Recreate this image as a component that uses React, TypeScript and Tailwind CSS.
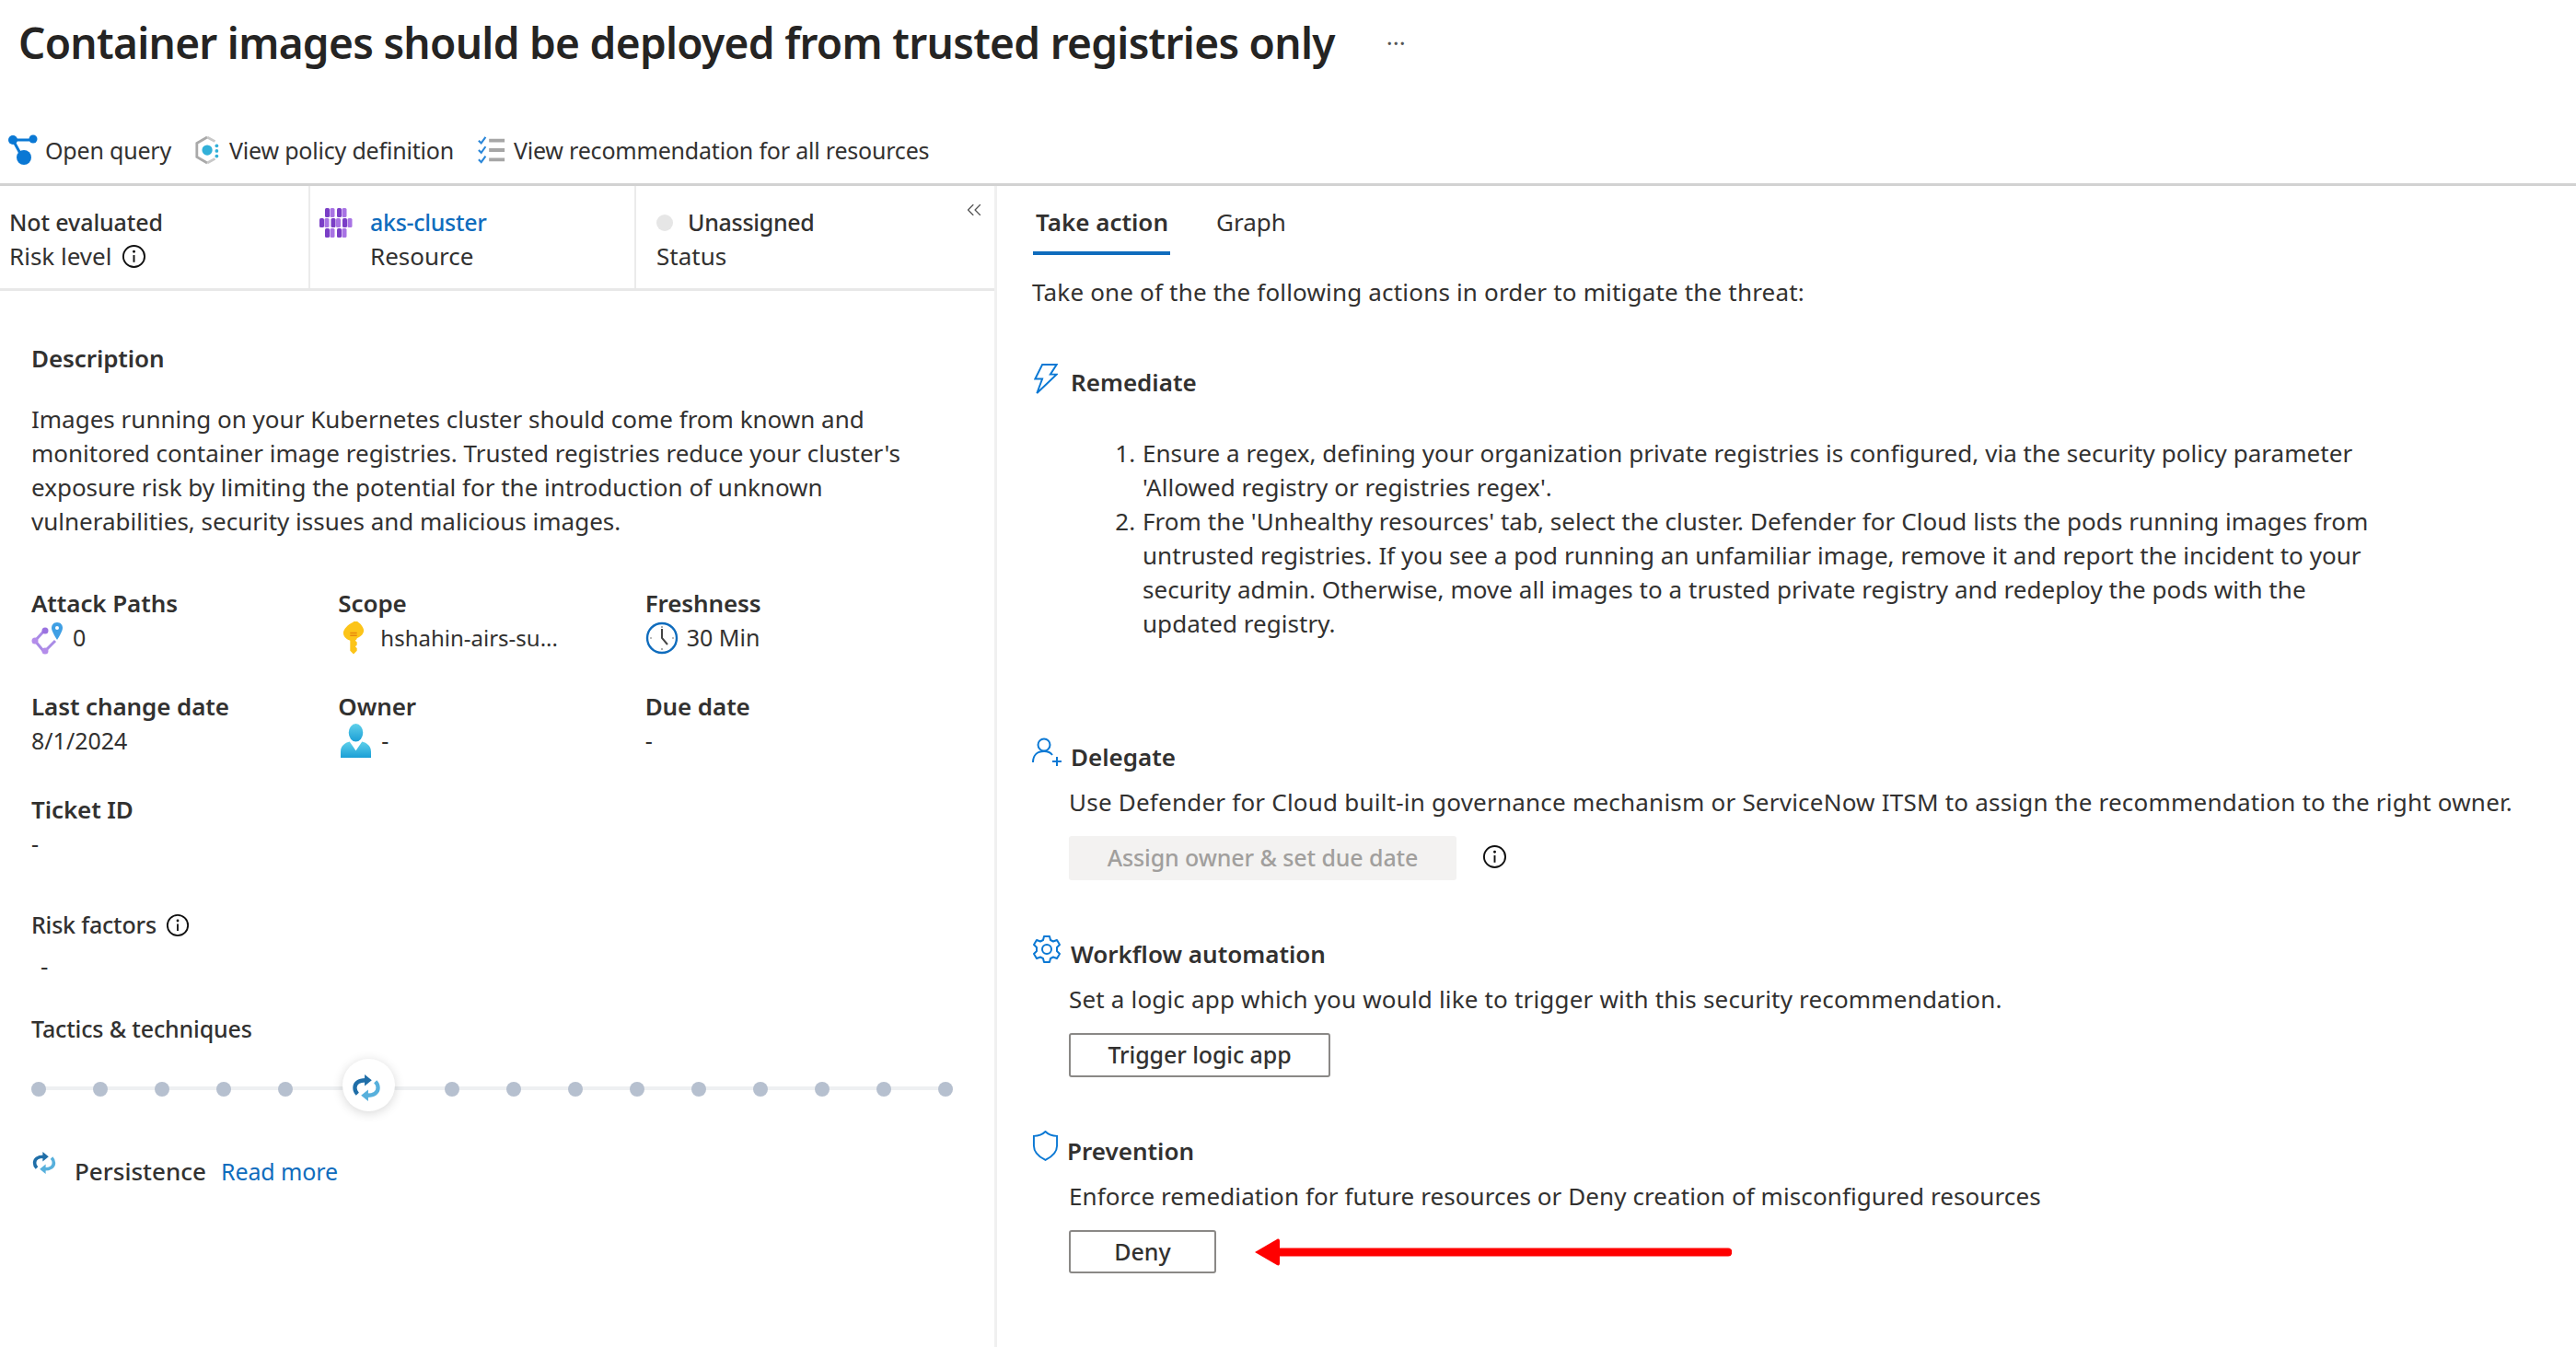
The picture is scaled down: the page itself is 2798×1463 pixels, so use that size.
import { ChevronsLeft } from "lucide-react"
import type { ReactNode } from "react"

const text = "text-[26px] leading-[37px] text-[#323130]"
const small = "text-[25px] leading-[37px] text-[#323130]"

function InfoIcon({ className }: { className?: string }) {
  return (
    <svg viewBox="0 0 28 28" className={className} fill="none">
      <circle cx="14" cy="14" r="12" stroke="#111" strokeWidth="2" />
      <circle cx="14" cy="8.6" r="1.5" fill="#111" />
      <path d="M14 12.5v8" stroke="#111" strokeWidth="2" />
    </svg>
  )
}

function QueryIcon() {
  return (
    <svg viewBox="0 0 34 34" className="h-[34px] w-[34px]">
      <path d="M6 6h22M6 6l11 20" stroke="#0a78d4" strokeWidth="3" fill="none" />
      <circle cx="6" cy="6" r="5" fill="#0a78d4" />
      <circle cx="28" cy="5" r="4.5" fill="#0a78d4" />
      <circle cx="18" cy="25" r="8" fill="#0a78d4" />
    </svg>
  )
}

function PolicyIcon() {
  return (
    <svg viewBox="0 0 32 34" className="h-[34px] w-[30px]">
      <path d="M15 2 3 9v16l12 7" stroke="#a9a9a9" strokeWidth="3" fill="none" />
      <path d="m15 2 9 5M15 32l9-5" stroke="#c8c8c8" strokeWidth="3" fill="none" />
      <circle cx="15" cy="17" r="6" fill="#32b0d8" />
      <circle cx="26" cy="12" r="2" fill="#32b0d8" />
      <circle cx="26" cy="18" r="2" fill="#32b0d8" />
      <circle cx="26" cy="24" r="2" fill="#32b0d8" />
    </svg>
  )
}

function ChecklistIcon() {
  return (
    <svg viewBox="0 0 32 34" className="h-[32px] w-[32px]" fill="none">
      <path d="m1 6 3 3 5-7M1 17l3 3 5-7M1 28l3 3 5-7" stroke="#2a86d8" strokeWidth="2.2" />
      <path d="M13 6h18M13 17h18M13 28h18" stroke="#a6a6a6" strokeWidth="4" />
    </svg>
  )
}

function ClusterIcon() {
  const cells = [
    [6, 0],
    [19, 0],
    [0, 11],
    [12.5, 11],
    [25, 11],
    [6, 22],
    [19, 22],
  ]
  return (
    <svg viewBox="0 0 36 32" className="mt-[3px] h-[32px] w-[36px]">
      {cells.map(([x, y]) => (
        <g key={`${x}-${y}`}>
          <rect x={x} y={y} width="5" height="10" rx="1.5" fill="#7a3ec6" />
          <rect x={x + 5.5} y={y} width="5" height="10" rx="1.5" fill="#a873e4" />
        </g>
      ))}
    </svg>
  )
}

function AttackIcon() {
  return (
    <svg viewBox="0 0 36 36" className="h-[36px] w-[36px]" fill="none">
      <path d="M15 9 4 21l10 12 12-12" stroke="#a98be6" strokeWidth="3" />
      <circle cx="15" cy="10" r="3.5" fill="#9a72e0" />
      <circle cx="4" cy="21" r="3.5" fill="#b48cea" />
      <circle cx="15" cy="32" r="3.5" fill="#b48cea" />
      <path d="M28 1c-4 0-6 3-6 6 0 4 6 13 6 13s6-9 6-13c0-3-2-6-6-6Z" fill="#3f9fe4" />
      <circle cx="28" cy="7" r="2" fill="#fff" />
    </svg>
  )
}

function KeyIcon() {
  return (
    <svg viewBox="0 0 26 38" className="h-[36px] w-[24px]">
      <path d="M13 0 C6 3 1 9 1 13c0 5 5 8 8 9v12l4 4 4-4v-3l-2-2 2-2v-3l-2-2 2-2v-1c3-1 8-4 8-9 0-4-5-10-12-13Z" fill="#fcc419" />
      <path d="M9 13h8M9 16h8" stroke="#e8890c" strokeWidth="1.5" />
    </svg>
  )
}

function ClockIcon() {
  return (
    <svg viewBox="0 0 36 36" className="h-[36px] w-[36px]" fill="none">
      <circle cx="18" cy="18" r="16" fill="#fff" stroke="#0f6cbd" strokeWidth="2.4" />
      <path d="M18 8v10l6 7" stroke="#444" strokeWidth="2" />
      <path d="M18 5v2M18 29v2M5 18h2M29 18h2" stroke="#777" strokeWidth="1.2" />
    </svg>
  )
}

function OwnerIcon() {
  return (
    <svg viewBox="0 0 34 38" className="h-[37px] w-[33px]">
      <defs>
        <linearGradient id="owner" x1="0" y1="0" x2="0" y2="1">
          <stop offset="0" stopColor="#5fd0ea" />
          <stop offset="1" stopColor="#1b9fd6" />
        </linearGradient>
      </defs>
      <ellipse cx="17" cy="10" rx="8" ry="10" fill="url(#owner)" />
      <path d="M0 38v-7c0-7 6-10 10-11l7 10 7-10c4 1 10 4 10 11v7Z" fill="url(#owner)" />
      <path d="m12 20 5 4 5-4-5 10Z" fill="#fff" />
    </svg>
  )
}

function PersistIcon({ className }: { className?: string }) {
  return (
    <svg viewBox="0 0 32 30" className={className} fill="none">
      <path d="M15 6.500C7 6.500 3 10 3 15c0 3 1 5 3 7" stroke="#1f6ea8" strokeWidth="4.500" />
      <path d="M14 0l8 6.500-8 6.500Z" fill="#1f6ea8" />
      <path d="M17 23.500c8 0 12-3.500 12-8.500 0-3-1-5-3-7" stroke="#57b0dc" strokeWidth="4.500" />
      <path d="M18 17l-8 6.500 8 6.500Z" fill="#57b0dc" />
    </svg>
  )
}

function BoltIcon() {
  return (
    <svg viewBox="0 0 26 34" className="h-[33px] w-[26px]" fill="none">
      <path d="M9 1h16l-7 11h7L3 33l6-16H1Z" stroke="#0a78d4" strokeWidth="2" strokeLinejoin="miter" />
    </svg>
  )
}

function DelegateIcon() {
  return (
    <svg viewBox="0 0 34 32" className="h-[32px] w-[34px]" fill="none">
      <circle cx="13" cy="8" r="6.500" stroke="#0a78d4" strokeWidth="2" />
      <path d="M1 27c0-8 5-12 12-12 4 0 7 1 9 4" stroke="#0a78d4" strokeWidth="2" />
      <path d="M27 21v10M22 26h10" stroke="#0a78d4" strokeWidth="2" />
    </svg>
  )
}

function GearIcon() {
  return (
    <svg viewBox="0 0 32 32" className="h-[32px] w-[32px]" fill="none" stroke="#0a78d4" strokeWidth="2">
      <circle cx="16" cy="16" r="5" />
      <path d="M13 2h6l1 4 3 1.500 4-1.500 3 5-3 3v4l3 3-3 5-4-1.500-3 1.500-1 4h-6l-1-4-3-1.500-4 1.500-3-5 3-3v-4l-3-3 3-5 4 1.500 3-1.500Z" strokeLinejoin="round" />
    </svg>
  )
}

function ShieldIcon() {
  return (
    <svg viewBox="0 0 30 34" className="h-[33px] w-[29px]" fill="none">
      <path d="M15 1c3 3 8 5 13 5v11c0 7-5 12-13 16C7 29 2 24 2 17V6c5 0 10-2 13-5Z" stroke="#0a78d4" strokeWidth="2" />
    </svg>
  )
}

function Field({ label, children }: { label: string; children: ReactNode }) {
  return (
    <div>
      <div className={`${text} font-semibold tracking-[-0.1px]`}>{label}</div>
      <div className={`${small} flex h-[37px] items-center`}>{children}</div>
    </div>
  )
}

function Section({ icon, title, desc, titleClass, descClass }: { icon: ReactNode; title: string; desc: string; titleClass?: string; descClass?: string }) {
  return (
    <>
      <div className="flex h-[37px] items-center">
        <div className="flex w-[42px] shrink-0 -translate-y-[4px]">{icon}</div>
        <div className={`${text} pt-[3px] font-semibold ${titleClass ?? ""}`}>{title}</div>
      </div>
      <div className={`${text} mt-[14px] pl-[40px] ${descClass ?? "tracking-[0.18px]"}`}>{desc}</div>
    </>
  )
}

function Timeline() {
  const before = [0, 1, 2, 3, 4]
  const after = [0, 1, 2, 3, 4, 5, 6, 7, 8]
  return (
    <div className="relative mt-[13px] flex h-[59px] w-[1001px] items-center">
      <div className="absolute top-[31px] right-0 left-0 h-[4px] bg-[#eef0f2]" />
      <div className="relative flex items-center gap-[51px]">
        {before.map((i) => (
          <div key={i} className="mt-[8px] h-[16px] w-[16px] rounded-full bg-[#b6c0cf]" />
        ))}
      </div>
      <div className="relative mr-[54px] ml-[54px] flex h-[57px] w-[57px] shrink-0 items-center justify-center rounded-full bg-white pt-[6px] pr-[6px] shadow-[0_2px_12px_rgba(0,0,0,0.16)]">
        <PersistIcon className="h-[29px] w-[32px]" />
      </div>
      <div className="relative flex items-center gap-[51px]">
        {after.map((i) => (
          <div key={i} className="mt-[8px] h-[16px] w-[16px] rounded-full bg-[#b6c0cf]" />
        ))}
      </div>
    </div>
  )
}

export default function App() {
  return (
    <div className="flex h-[1463px] w-full flex-col overflow-hidden bg-white font-['Noto_Sans',sans-serif]">
      <div className="flex h-[92px] items-center pl-[20px]">
        <h1 className="text-[46px] font-semibold tracking-[-0.7px] text-[#252423]">Container images should be deployed from trusted registries only</h1>
        <span className="ml-[56px] text-[26px] text-[#555]">···</span>
      </div>

      <div className="mt-[50px] flex h-[42px] items-center text-[25px] leading-[37px] tracking-[-0.2px] text-[#323130]">
        <div className="ml-[8px] flex items-center gap-[7px]">
          <QueryIcon />
          <span>Open query</span>
        </div>
        <div className="ml-[25px] flex items-center gap-[8px]">
          <PolicyIcon />
          <span>View policy definition</span>
        </div>
        <div className="ml-[25px] flex items-center gap-[8px]">
          <ChecklistIcon />
          <span>View recommendation for all resources</span>
        </div>
      </div>

      <div className="mt-[15px] flex flex-1 border-t-[3px] border-[#d2d2d2]">
        <div className="w-[1083px] shrink-0 border-r-[3px] border-[#f0f0f0]">
          <div className="flex h-[114px] border-b-[3px] border-[#e8e8e8]">
            <div className={`${text} w-[337px] border-r-2 border-[#ebebeb] pt-[21px] pl-[10px]`}>
              <div className="text-[25px] font-medium tracking-[-0.1px]">Not evaluated</div>
              <div className="flex items-center gap-[11px]">
                Risk level <InfoIcon className="h-[27px] w-[27px]" />
              </div>
            </div>
            <div className={`${text} flex w-[354px] border-r-2 border-[#ebebeb] pt-[21px] pl-[10px]`}>
              <div className="w-[55px] shrink-0">
                <ClusterIcon />
              </div>
              <div>
                <div className="text-[25px] font-medium tracking-[-0.3px] text-[#0f6cbd]">aks-cluster</div>
                <div>Resource</div>
              </div>
            </div>
            <div className={`${text} relative flex-1 pt-[21px] pl-[22px]`}>
              <div className="flex items-center gap-[16px]">
                <span className="h-[18px] w-[18px] rounded-full bg-[#e6e6e6]" />
                <span className="text-[25px] font-medium tracking-[-0.3px]">Unassigned</span>
              </div>
              <div>Status</div>
              <ChevronsLeft className="absolute top-[13px] right-[9px] h-[26px] w-[26px] text-[#555]" strokeWidth={1.2} />
            </div>
          </div>

          <div className="pl-[34px]">
            <div className={`${text} mt-[55px] font-semibold tracking-[-0.1px]`}>Description</div>
            <p className={`${text} mt-[29px]`}>
              Images running on your Kubernetes cluster should come from known and
              <br />
              monitored container image registries. Trusted registries reduce your cluster's
              <br />
              exposure risk by limiting the potential for the introduction of unknown
              <br />
              vulnerabilities, security issues and malicious images.
            </p>

            <div className="mt-[52px] grid w-[1000px] grid-cols-3 gap-y-[38px]">
              <Field label="Attack Paths">
                <AttackIcon />
                <span className="ml-[9px]">0</span>
              </Field>
              <Field label="Scope">
                <span className="ml-[5px]">
                  <KeyIcon />
                </span>
                <span className="ml-[17px] text-[24px]">hshahin-airs-su...</span>
              </Field>
              <Field label="Freshness">
                <ClockIcon />
                <span className="ml-[9px]">30 Min</span>
              </Field>
              <Field label="Last change date">8/1/2024</Field>
              <Field label="Owner">
                <span className="ml-[3px]">
                  <OwnerIcon />
                </span>
                <span className="ml-[11px]">-</span>
              </Field>
              <Field label="Due date">-</Field>
              <Field label="Ticket ID">-</Field>
            </div>

            <div className={`${small} mt-[51px] flex items-center gap-[10px] font-medium tracking-[-0.2px]`}>
              Risk factors <InfoIcon className="h-[26px] w-[26px]" />
            </div>
            <div className={`${text} mt-[8px] pl-[10px]`}>-</div>
            <div className={`${small} mt-[31px] font-medium tracking-[-0.15px]`}>Tactics &amp; techniques</div>
            <Timeline />
            <div className={`${text} mt-[46px] flex items-center`}>
              <PersistIcon className="h-[24px] w-[28px] -translate-y-[10px]" />
              <span className="ml-[19px] font-medium">Persistence</span>
              <span className="ml-[16px] text-[25px] tracking-[-0.1px] text-[#0f6cbd]">Read more</span>
            </div>
          </div>
        </div>

        <div className="flex-1 pl-[38px]">
          <div className={`${text} mt-[21px] ml-[1px] flex`}>
            <div className="h-[54px] w-[149px] border-b-4 border-[#0f6cbd] pl-[3px] font-semibold">Take action</div>
            <div className="ml-[50px]">Graph</div>
          </div>
          <div className={`${text} mt-[22px] tracking-[0.18px]`}>Take one of the the following actions in order to mitigate the threat:</div>

          <div className="mt-[59px]">
            <div className="flex h-[37px] items-center">
              <div className="flex w-[42px] shrink-0 -translate-y-[2px] pl-[2px]">
                <BoltIcon />
              </div>
              <div className={`${text} pt-[3px] font-semibold`}>Remediate</div>
            </div>
          </div>
          <ol className={`${text} mt-[42px] ml-[119px] w-[1370px] list-decimal tracking-[0.05px]`}>
            <li className="pl-[1px]">
              Ensure a regex, defining your organization private registries is configured, via the security policy parameter
              <br />
              'Allowed registry or registries regex'.
            </li>
            <li className="pl-[1px]">
              From the 'Unhealthy resources' tab, select the cluster. Defender for Cloud lists the pods running images from
              <br />
              untrusted registries. If you see a pod running an unfamiliar image, remove it and report the incident to your
              <br />
              security admin. Otherwise, move all images to a trusted private registry and redeploy the pods with the
              <br />
              updated registry.
            </li>
          </ol>

          <div className="mt-[106px]">
            <Section
              icon={<DelegateIcon />}
              title="Delegate"
              desc="Use Defender for Cloud built-in governance mechanism or ServiceNow ITSM to assign the recommendation to the right owner."
              descClass="tracking-[0.22px]"
            />
            <div className="mt-[18px] ml-[40px] flex items-center">
              <div className="flex h-[48px] w-[421px] items-center justify-center rounded-[3px] bg-[#f3f2f1] text-[25px] font-medium tracking-[-0.1px] text-[#a19f9d]">
                Assign owner &amp; set due date
              </div>
              <InfoIcon className="ml-[28px] h-[27px] w-[27px] -translate-y-[2px]" />
            </div>
          </div>

          <div className="mt-[60px]">
            <Section icon={<GearIcon />} title="Workflow automation" desc="Set a logic app which you would like to trigger with this security recommendation." />
            <div className="mt-[18px] ml-[40px] flex h-[48px] w-[284px] items-center justify-center rounded-[3px] border-2 border-[#8a8886] text-[25px] font-medium tracking-[-0.1px] text-[#323130]">
              Trigger logic app
            </div>
          </div>

          <div className="mt-[60px]">
            <Section
              icon={<ShieldIcon />}
              title="Prevention"
              titleClass="-ml-[4px]"
              desc="Enforce remediation for future resources or Deny creation of misconfigured resources"
              descClass="tracking-[0.09px]"
            />
            <div className="mt-[18px] ml-[40px] flex items-center">
              <div className="flex h-[47px] w-[160px] items-center justify-center rounded-[3px] border-2 border-[#8a8886] text-[25px] font-medium text-[#323130]">Deny</div>
              <svg viewBox="0 0 520 32" className="ml-[40px] h-[32px] w-[520px]">
                <path d="M28 16h488" stroke="#ff0000" strokeWidth="9" strokeLinecap="round" />
                <path d="M2 16 26 2c2-1 3 0 3 2v24c0 2-1 3-3 2Z" fill="#ff0000" />
              </svg>
            </div>
          </div>
        </div>
      </div>
    </div>
  )
}
